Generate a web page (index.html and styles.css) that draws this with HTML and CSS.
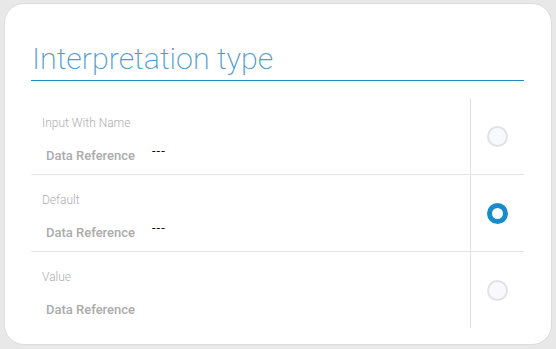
FILE: index.html
```html
<!DOCTYPE html>
<html>
<head>
<meta charset="utf-8">
<link rel="stylesheet" href="styles.css">
</head>
<body>
<div class="card">
  <h1 class="title">Interpretation type</h1>
  <div class="table">
    <div class="row">
      <div class="info">
        <div class="label">Input With Name</div>
        <div class="ref"><span class="ref-name">Data Reference</span><span class="ref-val">---</span></div>
      </div>
      <div class="choice"><span class="radio"></span></div>
    </div>
    <div class="row">
      <div class="info">
        <div class="label">Default</div>
        <div class="ref"><span class="ref-name">Data Reference</span><span class="ref-val">---</span></div>
      </div>
      <div class="choice"><span class="radio checked"></span></div>
    </div>
    <div class="row last">
      <div class="info">
        <div class="label">Value</div>
        <div class="ref"><span class="ref-name">Data Reference</span><span class="ref-val"></span></div>
      </div>
      <div class="choice"><span class="radio"></span></div>
    </div>
  </div>
</div>
</body>
</html>
```
FILE: styles.css
```css
html, body {
  margin: 0;
  padding: 0;
}
body {
  background: #e8e8e8;
  font-family: Roboto, "Liberation Sans", sans-serif;
  width: 556px;
  height: 349px;
  padding: 3px 4px 4px 4px;
  box-sizing: border-box;
}
.card {
  background: #fff;
  border: 1px solid #dcdcdc;
  border-radius: 20px;
  height: 100%;
  box-sizing: border-box;
  padding: 34px 27px 0 26px;
}
.title {
  margin: 0;
  font-weight: 200;
  font-size: 30.4px;
  line-height: 42px;
  color: #4a9bd0;
  border-bottom: 1px solid #1f8dc0;
  padding-left: 1px;
  height: 43px;
  box-sizing: border-box;
}
.table {
  margin-top: 17px;
}
.row {
  display: flex;
  height: 77px;
  border-bottom: 1px solid #e4e4e4;
  box-sizing: border-box;
}
.row.last {
  border-bottom: none;
  height: 76px;
}
.info {
  flex: 1;
  border-right: 1px solid #e0e0e0;
  padding: 18px 0 0 11px;
}
.label {
  font-size: 12px;
  font-weight: 300;
  line-height: 14px;
  color: #aeaeae;
}
.ref {
  margin-top: 18px;
  padding-left: 4px;
  display: flex;
  align-items: flex-start;
}
.ref-name {
  font-size: 13px;
  font-weight: 500;
  line-height: 15px;
  color: #ababab;
  width: 106px;
}
.ref-val {
  font-size: 13px;
  line-height: 14px;
  color: #111;
  margin-top: -4px;
  letter-spacing: 1px;
}
.choice {
  width: 53px;
  display: flex;
  align-items: center;
  justify-content: center;
}
.radio {
  width: 21px;
  height: 21px;
  border-radius: 50%;
  border: 2px solid #e2e2e6;
  background: #f8f9fc;
  box-sizing: border-box;
}
.radio.checked {
  border: 5px solid #168ccb;
  background: #fff;
}
```
